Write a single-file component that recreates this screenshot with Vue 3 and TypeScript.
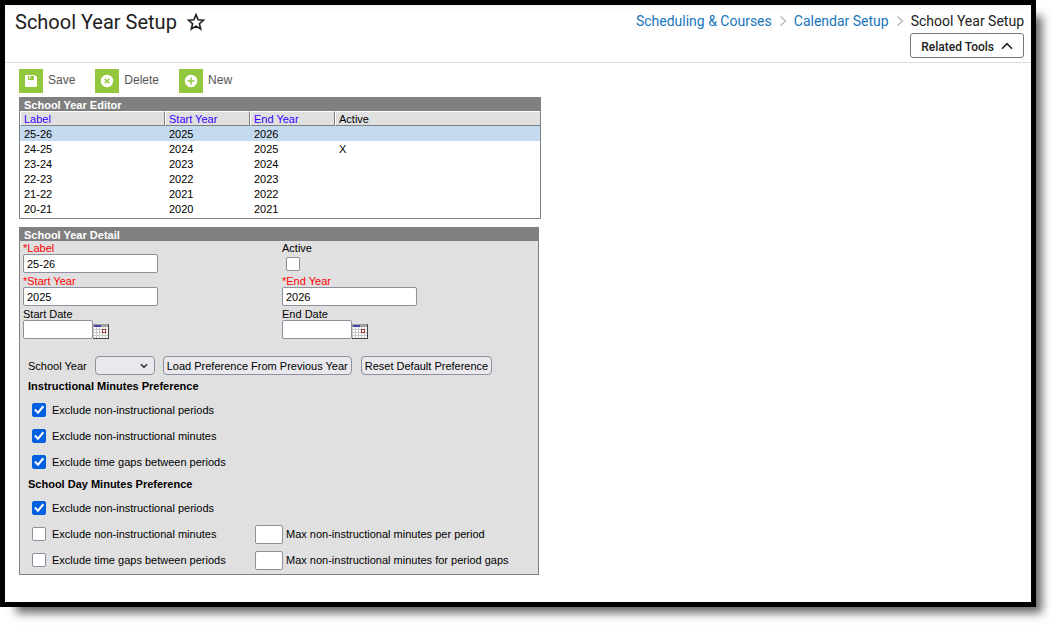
<script setup lang="ts">
import { reactive, ref } from 'vue'

interface SchoolYear {
  label: string
  start: string
  end: string
  active: boolean
}

interface Preference {
  id: string
  text: string
  checked: boolean
  max?: string
  maxText?: string
}

const years: SchoolYear[] = [
  { label: '25-26', start: '2025', end: '2026', active: false },
  { label: '24-25', start: '2024', end: '2025', active: true },
  { label: '23-24', start: '2023', end: '2024', active: false },
  { label: '22-23', start: '2022', end: '2023', active: false },
  { label: '21-22', start: '2021', end: '2022', active: false },
  { label: '20-21', start: '2020', end: '2021', active: false },
]

const selected = ref('25-26')
const detail = reactive({
  label: '25-26',
  active: false,
  startYear: '2025',
  endYear: '2026',
  startDate: '',
  endDate: '',
})
const sourceYear = ref('')

const instructional = reactive<Preference[]>([
  { id: 'im-periods', text: 'Exclude non-instructional periods', checked: true },
  { id: 'im-minutes', text: 'Exclude non-instructional minutes', checked: true },
  { id: 'im-gaps', text: 'Exclude time gaps between periods', checked: true },
])

const schoolDay = reactive<Preference[]>([
  { id: 'sd-periods', text: 'Exclude non-instructional periods', checked: true },
  {
    id: 'sd-minutes',
    text: 'Exclude non-instructional minutes',
    checked: false,
    max: '',
    maxText: 'Max non-instructional minutes per period',
  },
  {
    id: 'sd-gaps',
    text: 'Exclude time gaps between periods',
    checked: false,
    max: '',
    maxText: 'Max non-instructional minutes for period gaps',
  },
])

const groups = [
  { title: 'Instructional Minutes Preference', items: instructional },
  { title: 'School Day Minutes Preference', items: schoolDay },
]

function choose(year: SchoolYear) {
  selected.value = year.label
  detail.label = year.label
  detail.startYear = year.start
  detail.endYear = year.end
  detail.active = year.active
}
</script>

<template>
  <div class="stage">
    <div class="window">
      <header class="header">
        <div class="title">
          <h1>School Year Setup</h1>
          <button type="button" class="star" aria-label="Add to favorites">
            <svg width="18" height="18" viewBox="0 0 18 18">
              <path
                d="M9 1.6 L11.1 6.7 L16.6 7.1 L12.4 10.7 L13.7 16 L9 13.1 L4.3 16 L5.6 10.7 L1.4 7.1 L6.9 6.7 Z"
                fill="none"
                stroke="#212121"
                stroke-width="1.6"
              />
            </svg>
          </button>
        </div>
        <div class="side">
          <nav class="crumbs" aria-label="Breadcrumb">
            <a href="#">Scheduling &amp; Courses</a>
            <svg width="8" height="12" viewBox="0 0 8 12"><path d="M1.5 1.5 L6.5 6 L1.5 10.5" /></svg>
            <a href="#">Calendar Setup</a>
            <svg width="8" height="12" viewBox="0 0 8 12"><path d="M1.5 1.5 L6.5 6 L1.5 10.5" /></svg>
            <span>School Year Setup</span>
          </nav>
          <button type="button" class="related">
            Related Tools
            <svg width="12" height="8" viewBox="0 0 12 8">
              <path d="M1 6.8 L6 1.6 L11 6.8" fill="none" stroke="#212121" stroke-width="1.6" />
            </svg>
          </button>
        </div>
      </header>

      <main class="content">
        <div class="toolbar">
          <button type="button" class="tool">
            <svg width="24" height="24" viewBox="0 0 24 24">
              <rect width="24" height="24" fill="#93c83e" />
              <path d="M7 6 H15.5 L18 8 V17 Q18 18 17 18 H7 Q6 18 6 17 V7 Q6 6 7 6 Z" fill="#fff" />
              <path d="M9 7 H15 V11 H9 Z" fill="#93c83e" />
              <path d="M9.7 7 H12 V10 H9.7 Z" fill="#c9e39f" />
            </svg>
            Save
          </button>
          <button type="button" class="tool">
            <svg width="24" height="24" viewBox="0 0 24 24">
              <rect width="24" height="24" fill="#93c83e" />
              <circle cx="12" cy="12" r="6.2" fill="#fff" />
              <path d="M9.7 9.7 L14.3 14.3 M14.3 9.7 L9.7 14.3" stroke="#93c83e" stroke-width="1.5" />
            </svg>
            Delete
          </button>
          <button type="button" class="tool">
            <svg width="24" height="24" viewBox="0 0 24 24">
              <rect width="24" height="24" fill="#93c83e" />
              <circle cx="12" cy="12" r="6.2" fill="#fff" />
              <path d="M8.5 12 H15.5 M12 8.5 V15.5" stroke="#93c83e" stroke-width="1.5" />
            </svg>
            New
          </button>
        </div>

        <section class="editor">
          <h2 class="bar">School Year Editor</h2>
          <table>
            <colgroup>
              <col class="c-label" />
              <col class="c-year" />
              <col class="c-year" />
              <col />
            </colgroup>
            <thead>
              <tr>
                <th><a href="#">Label</a></th>
                <th><a href="#">Start Year</a></th>
                <th><a href="#">End Year</a></th>
                <th>Active</th>
              </tr>
            </thead>
            <tbody>
              <tr
                v-for="year in years"
                :key="year.label"
                :class="{ selected: year.label === selected }"
                @click="choose(year)"
              >
                <td>{{ year.label }}</td>
                <td>{{ year.start }}</td>
                <td>{{ year.end }}</td>
                <td>{{ year.active ? 'X' : '' }}</td>
              </tr>
            </tbody>
          </table>
        </section>

        <section class="detail">
          <h2 class="bar">School Year Detail</h2>
          <div class="fields">
            <div class="field">
              <label for="f-label" class="required">*Label</label>
              <input id="f-label" v-model="detail.label" type="text" class="text" />
            </div>
            <div class="field">
              <label for="f-active">Active</label>
              <input id="f-active" v-model="detail.active" type="checkbox" class="check lone" />
            </div>
            <div class="field">
              <label for="f-start" class="required">*Start Year</label>
              <input id="f-start" v-model="detail.startYear" type="text" class="text" />
            </div>
            <div class="field">
              <label for="f-end" class="required">*End Year</label>
              <input id="f-end" v-model="detail.endYear" type="text" class="text" />
            </div>
            <div v-for="d in (['startDate', 'endDate'] as const)" :key="d" class="field">
              <label :for="d">{{ d === 'startDate' ? 'Start Date' : 'End Date' }}</label>
              <div class="date">
                <input :id="d" v-model="detail[d]" type="text" class="text" />
                <button type="button" class="calendar" aria-label="Pick a date">
                  <svg width="16" height="15" viewBox="0 0 16 15" shape-rendering="crispEdges">
                    <rect width="16" height="15" fill="#c8c8c8" />
                    <rect width="16" height="3" fill="#a0a0a0" />
                    <rect x="1" y="1" width="7" height="2" fill="#4444aa" />
                    <g fill="#fff">
                      <template v-for="r in 4" :key="r">
                        <rect v-for="c in 5" :key="c" :x="c * 3 - 2" :y="r * 3" width="2" height="2" />
                      </template>
                    </g>
                    <rect x="9" y="5" width="4" height="4" fill="#a03c3c" />
                    <rect x="10" y="6" width="2" height="2" fill="#fff" />
                    <path d="M15 0 H16 V15 H0 V14 H15 Z" fill="#444" />
                  </svg>
                </button>
              </div>
            </div>
          </div>

          <div class="actions">
            <label for="source">School Year</label>
            <span class="select">
              <select id="source" v-model="sourceYear">
                <option value=""></option>
                <option v-for="year in years" :key="year.label">{{ year.label }}</option>
              </select>
              <svg width="8" height="6" viewBox="0 0 8 6">
                <path d="M1 1.2 L4 4.2 L7 1.2" fill="none" stroke="#222" stroke-width="1.4" />
              </svg>
            </span>
            <div class="pushes">
              <button type="button" class="push">Load Preference From Previous Year</button>
              <button type="button" class="push">Reset Default Preference</button>
            </div>
          </div>

          <div class="groups">
            <div v-for="group in groups" :key="group.title">
              <h3>{{ group.title }}</h3>
              <div v-for="item in group.items" :key="item.id" class="pref">
                <span class="option">
                  <input :id="item.id" v-model="item.checked" type="checkbox" class="check" />
                  <label :for="item.id">{{ item.text }}</label>
                </span>
                <span v-if="item.maxText" class="max">
                  <input :id="item.id + '-max'" v-model="item.max" type="text" class="text" />
                  <label :for="item.id + '-max'">{{ item.maxText }}</label>
                </span>
              </div>
            </div>
          </div>
        </section>
      </main>
    </div>
  </div>
</template>

<style>
body {
  margin: 0;
  background: #fff;
}
</style>

<style scoped>
* {
  box-sizing: border-box;
}

.stage {
  display: flex;
  min-height: 100vh;
  padding: 0 25px 25px 0;
  font: 11px/15px 'Liberation Sans', Arial, sans-serif;
  color: #000;
}

.window {
  flex: 1;
  min-width: 0;
  border: 5px solid #000;
  background: #fff;
  box-shadow: 11px 11px 9px -5px rgba(0, 0, 0, 0.6);
}

h1,
h2,
h3 {
  margin: 0;
}

button {
  font: inherit;
  color: inherit;
  padding: 0;
  border: 0;
  background: none;
  cursor: pointer;
}

svg {
  display: block;
}

.header {
  display: flex;
  justify-content: space-between;
  height: 58px;
  padding: 4px 7px 0 10px;
  border-bottom: 1px solid #ddd;
  background: linear-gradient(#f6f6f6, #fff 6px);
  font-family: Roboto, sans-serif;
  color: #212121;
}

.title {
  display: flex;
  gap: 10px;
  align-items: center;
  height: 26px;
}

h1 {
  font-size: 20px;
  line-height: 26px;
  font-weight: 400;
}

.side {
  display: flex;
  flex-direction: column;
  align-items: flex-end;
}

.crumbs {
  display: flex;
  align-items: center;
  gap: 7px;
  font-size: 14px;
  line-height: 24px;
}

.crumbs a {
  color: #1976bc;
  text-decoration: none;
}

.crumbs path {
  fill: none;
  stroke: #bbb;
  stroke-width: 1.5;
}

.related {
  display: flex;
  align-items: center;
  gap: 7px;
  height: 25px;
  padding: 4px 10px 0;
  border: 1px solid #777;
  border-radius: 3px;
  font-size: 12px;
  font-weight: 500;
}

.related svg {
  margin-bottom: 4px;
}

.content {
  padding: 6px 14px 0;
}

.toolbar {
  display: flex;
  gap: 20px;
  margin-bottom: 4px;
}

.tool {
  display: flex;
  gap: 5px;
  font-size: 12px;
  line-height: 22px;
  color: #555;
}

.bar {
  height: 14px;
  padding-left: 4px;
  background: #808080;
  color: #fff;
  font-size: 11px;
  line-height: 16px;
  font-weight: 700;
}

.editor {
  max-width: 522px;
  padding-bottom: 2px;
  border: solid #808080;
  border-width: 0 1px 1px;
}

table {
  width: 100%;
  table-layout: fixed;
  border-collapse: separate;
  border-spacing: 0;
}

.c-label {
  width: 145px;
}

.c-year {
  width: 85px;
}

th,
td {
  height: 15px;
  padding: 2px 0 0 4px;
  font-weight: 400;
  line-height: 13px;
  text-align: left;
}

th {
  padding: 1px 0 0 3px;
  border: 1px solid;
  border-color: #fff #808080 #808080 #fff;
  background: #e0e0e0;
  line-height: 12px;
}

th:last-child {
  border-right: 0;
}

th a {
  color: #30f;
  text-decoration: none;
}

.selected {
  background: #c4daee;
}

.detail {
  max-width: 520px;
  margin-top: 8px;
  padding-bottom: 1px;
  border: solid #808080;
  border-width: 0 1px 1px;
  background: #e0e0e0;
}

.fields {
  display: grid;
  grid-template-columns: 259px 1fr;
  row-gap: 1px;
  padding-left: 3px;
}

.field label {
  display: block;
  height: 13px;
  line-height: 15px;
}

.field .required {
  color: #f00;
}

.text {
  display: block;
  width: 135px;
  height: 19px;
  margin: 0;
  padding: 1px 3px 0;
  border: 1px solid #8f8f9d;
  border-radius: 2px;
  background: #fff;
  font: inherit;
  color: #000;
}

.date {
  display: flex;
  align-items: flex-end;
}

.date .text {
  width: 70px;
}

.check {
  display: block;
  appearance: none;
  width: 14px;
  height: 14px;
  margin: 0;
  border: 1px solid #8f8f9d;
  border-radius: 2px;
  background: #fff;
}

.check.lone {
  margin: 3px 0 0 4px;
}

.check:checked {
  border-color: #0060df;
  background: #0060df;
}

.check:checked::before {
  content: '';
  display: block;
  height: 12px;
  background: #fff;
  clip-path: polygon(10% 52%, 22% 40%, 40% 60%, 80% 12%, 93% 24%, 42% 86%);
}

.actions {
  display: flex;
  align-items: center;
  gap: 8px;
  margin-top: 17px;
  padding-left: 8px;
}

.actions label {
  padding-top: 2px;
}

.select {
  display: block;
  position: relative;
}

.select select {
  display: block;
  appearance: none;
  width: 60px;
  height: 19px;
  margin: 0;
  padding: 0 16px 0 4px;
  border: 1px solid #8f8f9d;
  border-radius: 4px;
  background: #e9e9ed;
  font: inherit;
}

.select svg {
  position: absolute;
  top: 7px;
  right: 7px;
  pointer-events: none;
}

.pushes {
  display: flex;
  gap: 9px;
}

.push {
  height: 19px;
  padding: 1px 3px 0;
  border: 1px solid #8f8f9d;
  border-radius: 4px;
  background: #e9e9ed;
  white-space: nowrap;
}

.groups {
  margin-top: 2px;
  padding-left: 8px;
}

h3 {
  padding-bottom: 2px;
  font-size: 11px;
  line-height: 18px;
  font-weight: 700;
}

.pref {
  display: flex;
  align-items: center;
  height: 26px;
  padding-left: 4px;
}

.option {
  display: flex;
  align-items: center;
  gap: 6px;
  width: 223px;
}

.max {
  display: flex;
  align-items: center;
  gap: 3px;
}

.max .text {
  width: 28px;
}
</style>
